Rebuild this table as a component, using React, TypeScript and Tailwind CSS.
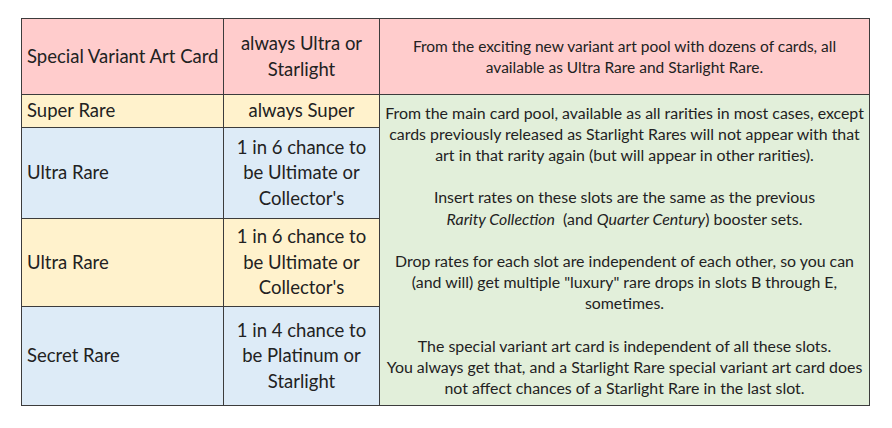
import React from "react";

const PINK = "bg-[#ffcccc]";
const YELLOW = "bg-[#fff2cc]";
const BLUE = "bg-[#ddebf7]";
const GREEN = "bg-[#e2efda]";

const rows = [
  { slot: "Special Variant Art Card", odds: ["always Ultra or", "Starlight"], bg: PINK },
  { slot: "Super Rare", odds: ["always Super"], bg: YELLOW },
  { slot: "Ultra Rare", odds: ["1 in 6 chance to", "be Ultimate or", "Collector's"], bg: BLUE },
  { slot: "Ultra Rare", odds: ["1 in 6 chance to", "be Ultimate or", "Collector's"], bg: YELLOW },
  { slot: "Secret Rare", odds: ["1 in 4 chance to", "be Platinum or", "Starlight"], bg: BLUE },
];

const App = () => {
  return (
    <div className="min-h-screen w-full bg-white pl-[21px] pt-[18px] text-[#222]" style={{ fontFamily: "Lato, 'Open Sans', sans-serif" }}>
      <div className="grid w-fit grid-cols-[201px_155px_489px] grid-rows-[75px_32px_90px_87px_98px] gap-px bg-[#3c3c3c] p-px">
        {rows.map((r, i) => (
          <React.Fragment key={i}>
            <div className={`${r.bg} flex items-center whitespace-nowrap pl-[5px] text-[18.5px]`} style={{ gridRow: i + 1, gridColumn: 1 }}>
              {r.slot}
            </div>
            <div className={`${r.bg} flex flex-col items-center justify-center whitespace-nowrap text-center text-[18.5px] leading-[25.5px]`} style={{ gridRow: i + 1, gridColumn: 2 }}>
              {r.odds.map((o, j) => (
                <span key={j}>{o}</span>
              ))}
            </div>
          </React.Fragment>
        ))}
        <div className={`${PINK} col-start-3 row-start-1 flex flex-col items-center justify-center whitespace-nowrap text-center text-[15.5px] leading-[21px]`}>
          <span>From the exciting new variant art pool with dozens of cards, all</span>
          <span>available as Ultra Rare and Starlight Rare.</span>
        </div>
        <div className={`${GREEN} col-start-3 row-span-4 row-start-2 flex flex-col items-center justify-center whitespace-nowrap text-center text-[15.9px] leading-[21.2px]`}>
          <span>From the main card pool, available as all rarities in most cases, except</span>
          <span>cards previously released as Starlight Rares will not appear with that</span>
          <span>art in that rarity again (but will appear in other rarities).</span>
          <span>&nbsp;</span>
          <span>Insert rates on these slots are the same as the previous</span>
          <span>
            <i>Rarity Collection</i>&nbsp; (and <i>Quarter Century</i>) booster sets.
          </span>
          <span>&nbsp;</span>
          <span>Drop rates for each slot are independent of each other, so you can</span>
          <span>(and will) get multiple "luxury" rare drops in slots B through E,</span>
          <span>sometimes.</span>
          <span>&nbsp;</span>
          <span>The special variant art card is independent of all these slots.</span>
          <span>You always get that, and a Starlight Rare special variant art card does</span>
          <span>not affect chances of a Starlight Rare in the last slot.</span>
        </div>
      </div>
    </div>
  );
};

export default App;
